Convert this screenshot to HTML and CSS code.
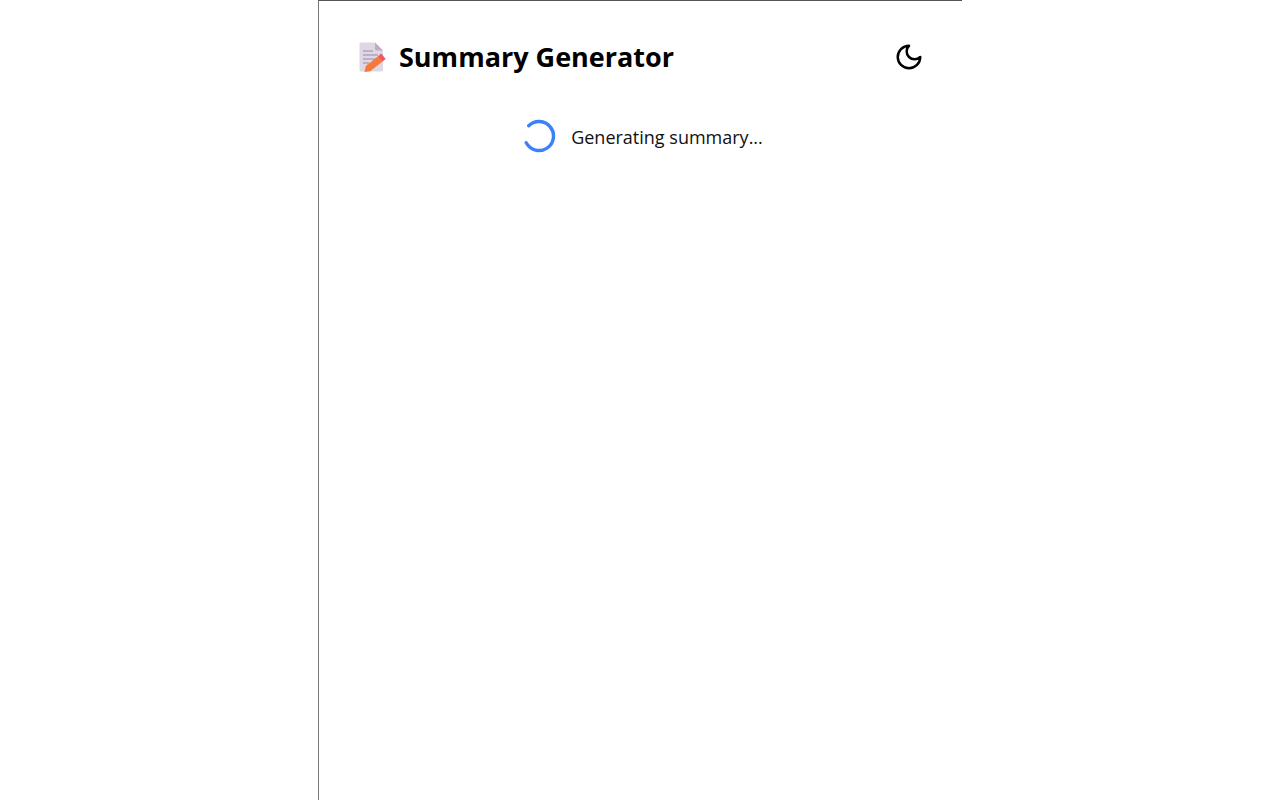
FILE: index.html
```html
<!DOCTYPE html>
<html lang="en">

<head>
    <meta charset="UTF-8">
    <meta name="viewport" content="width=device-width, initial-scale=1.0">
    <title>Summary Generator</title>
    <link rel="stylesheet" href="styles.css">
</head>

<body>
    <div class="popup">
        <header class="header">
            <div class="brand">
                <svg class="brand-icon" viewBox="0 0 28 32" width="28" height="32">
                    <path d="M2 1.500H17L25 9.500V29a1.500 1.500 0 0 1-1.500 1.500H3A1.500 1.500 0 0 1 1.500 29V2A.5.5 0 0 1 2 1.500Z" fill="#dfd7e4"/>
                    <path d="M17 1.500L25 9.500H18.500A1.500 1.500 0 0 1 17 8Z" fill="#b9aec2"/>
                    <path d="M5 10H15M5 14H20M5 18H17M5 22H11" stroke="#b0a4bc" stroke-width="1.500" fill="none"/>
                    <path d="M7.800 24.900L19.800 15.400L24.200 20.800L12.200 30.300L6.500 31Z" fill="#f5793b"/>
                    <path d="M19.800 15.400L23.300 12.600L27.700 18L24.200 20.800Z" fill="#ec5a5f"/>
                </svg>
                <h1 class="title">Summary Generator</h1>
            </div>
            <button class="theme-btn" type="button" aria-label="Toggle theme">
                <svg viewBox="0 0 24 24" width="30" height="30" fill="none" stroke="#000" stroke-width="2" stroke-linecap="round" stroke-linejoin="round">
                    <path d="M12 3a6 6 0 0 0 9 9 9 9 0 1 1-9-9Z"/>
                </svg>
            </button>
        </header>

        <div class="loading">
            <svg class="spinner" viewBox="0 0 34 34" width="34" height="34" fill="none">
                <path d="M6.750 6.750A14.500 14.500 0 1 1 4.200 23.800" stroke="#3b82f6" stroke-width="3.400" stroke-linecap="round"/>
            </svg>
            <span class="loading-text">Generating summary...</span>
        </div>
    </div>
</body>

</html>
```

FILE: styles.css
```css
html, body {
    height: 100%;
}

body {
    margin: 0;
    background-color: #fff;
    display: flex;
    justify-content: center;
    font-family: "Open Sans", "Noto Sans", sans-serif;
    color: #000;
    overflow: hidden;
}

.popup {
    width: 644px;
    height: 100%;
    box-sizing: border-box;
    padding: 40px 38px 0 39px;
    border-top: 1px solid #555;
    border-left: 1px solid #777;
}

.header {
    display: flex;
    align-items: center;
    justify-content: space-between;
}

.brand {
    display: flex;
    align-items: center;
    gap: 13px;
}

.title {
    margin: 0;
    font-size: 27px;
    line-height: 32px;
    font-weight: 700;
}

.theme-btn {
    display: flex;
    padding: 0;
    margin-top: -1px;
    border: 0;
    background: none;
}

.loading {
    display: flex;
    align-items: center;
    justify-content: center;
    gap: 15px;
    margin-top: 46px;
    padding-left: 3px;
}

.loading-text {
    margin-top: 2px;
    font-size: 18px;
    color: #111;
}
```
